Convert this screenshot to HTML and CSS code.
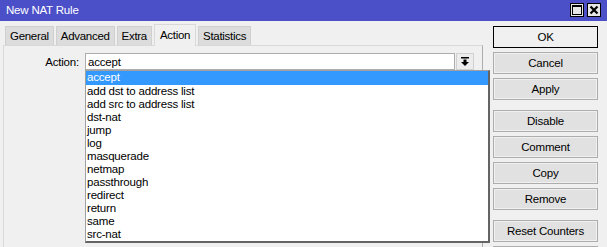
FILE: index.html
```html
<!DOCTYPE html>
<html lang="en">
<head>
  <meta charset="UTF-8">
  <title>New NAT Rule</title>
  <link rel="stylesheet" href="styles.css">
</head>
<body>
  <div class="window">
    <div class="titlebar">
      <span class="title">New NAT Rule</span>
      <div class="win-buttons">
        <span class="win-btn">
          <svg width="10" height="10" viewBox="0 0 10 10"><rect x="0.5" y="0.5" width="9" height="9" fill="none" stroke="#000"/><rect x="0" y="0" width="10" height="2" fill="#000"/></svg>
        </span>
        <span class="win-btn">
          <svg width="10" height="10" viewBox="0 0 10 10"><path d="M1.5 1.5 L8.5 8.5 M8.5 1.5 L1.5 8.5" stroke="#000" stroke-width="2.2"/></svg>
        </span>
      </div>
    </div>

    <div class="body">
      <div class="main">
        <!-- Tabs -->
        <div class="tabs">
          <div class="tab">General</div>
          <div class="tab">Advanced</div>
          <div class="tab">Extra</div>
          <div class="tab active">Action</div>
          <div class="tab">Statistics</div>
        </div>

        <div class="panel">
          <div class="row">
            <label class="label">Action:</label>
            <div class="combo">
              <div class="combo-field">accept</div>
              <div class="combo-btn">
                <svg width="10" height="10" viewBox="0 0 10 10"><rect x="1" y="0" width="8" height="1.5" fill="#000"/><path d="M3.5 2.5 H6.5 V5 H9 L5 9 L1 5 H3.5 Z" fill="#000"/></svg>
              </div>

              <ul class="dropdown">
                <li class="selected">accept</li>
                <li>add dst to address list</li>
                <li>add src to address list</li>
                <li>dst-nat</li>
                <li>jump</li>
                <li>log</li>
                <li>masquerade</li>
                <li>netmap</li>
                <li>passthrough</li>
                <li>redirect</li>
                <li>return</li>
                <li>same</li>
                <li>src-nat</li>
              </ul>
            </div>
          </div>
        </div>
      </div>

      <!-- Side buttons -->
      <div class="side">
        <button class="btn default">OK</button>
        <button class="btn">Cancel</button>
        <button class="btn">Apply</button>
        <button class="btn group">Disable</button>
        <button class="btn">Comment</button>
        <button class="btn">Copy</button>
        <button class="btn">Remove</button>
        <button class="btn group">Reset Counters</button>
        <button class="btn"></button>
      </div>
    </div>
  </div>
</body>
</html>
```

FILE: styles.css
```css
/* General */
body {
  margin: 0;
  padding: 0;
  font-family: 'Liberation Sans', Arial, sans-serif;
  font-size: 11px;
  letter-spacing: -0.2px;
  color: #000;
  background: #f0f0f0;
}

.window {
  width: 607px;
  height: 247px;
  overflow: hidden;
  background: #f0f0f0;
}

/* Title bar */
.titlebar {
  height: 21px;
  background: #4b4fc8;
  display: flex;
  align-items: center;
  justify-content: space-between;
  padding: 0 6px 0 6px;
  box-sizing: border-box;
}

.title {
  color: #fff;
  font-size: 11.5px;
  margin-top: -1px;
}

.win-buttons {
  display: flex;
  gap: 3px;
  margin-top: -1px;
}

.win-btn {
  width: 12px;
  height: 12px;
  background: #e6e6e6;
  border: 1px solid #000;
  display: flex;
  align-items: center;
  justify-content: center;
}

/* Layout */
.body {
  display: flex;
}

.main {
  width: 480px;
  margin-left: 3px;
}

/* Tabs */
.tabs {
  display: flex;
  gap: 2px;
  margin-top: 4px;
  margin-left: 2px;
  height: 20px;
  align-items: flex-end;
}

.tab {
  height: 19px;
  line-height: 19px;
  padding: 0 4px;
  background: #dcdcdc;
  border: 1px solid #d0d0d0;
  border-bottom: none;
  font-size: 11.5px;
  letter-spacing: -0.3px;
  box-sizing: border-box;
}

.tab.active {
  height: 22px;
  line-height: 20px;
  background: #f0f0f0;
  border-color: #d9d9d9;
  margin-bottom: -1px;
  position: relative;
  padding: 0 5px;
}

.panel {
  border-top: 1px solid #d9d9d9;
  border-left: 1px solid #d9d9d9;
  border-right: 1px solid #adadad;
  height: 220px;
  box-sizing: border-box;
}

.row {
  display: flex;
  align-items: flex-start;
  margin-top: 7px;
}

.label {
  width: 81px;
  text-align: right;
  padding-top: 3px;
  padding-right: 6px;
  box-sizing: border-box;
  font-size: 11.5px;
}

/* Combo box */
.combo {
  position: relative;
  display: flex;
  gap: 1px;
}

.combo-field {
  width: 370px;
  height: 17px;
  line-height: 16px;
  background: #fff;
  border: 1px solid #adadad;
  padding-left: 2px;
  box-sizing: border-box;
  font-size: 11.5px;
}

.combo-btn {
  width: 18px;
  height: 17px;
  background: #ececec;
  border: 1px solid #d0d0d0;
  box-sizing: border-box;
  display: flex;
  align-items: center;
  justify-content: center;
}

.dropdown {
  position: absolute;
  top: 17px;
  left: 0;
  width: 405px;
  margin: 0;
  padding: 0;
  list-style: none;
  background: #fff;
  border: 1px solid #a0a0a0;
  border-right: 2px solid #646464;
  border-bottom: 2px solid #646464;
  box-sizing: border-box;
  font-size: 11.5px;
}

.dropdown li {
  height: 13px;
  line-height: 13px;
  padding-left: 1px;
}

.dropdown li.selected {
  background: #3399ff;
  color: #fff;
  height: 14px;
}

/* Side buttons */
.side {
  display: flex;
  flex-direction: column;
  gap: 4px;
  margin-left: 10px;
  margin-top: 5px;
}

.btn {
  flex-shrink: 0;
  width: 105px;
  height: 22px;
  margin: 0;
  padding: 0;
  background: #e1e1e1;
  border: 1px solid #adadad;
  font-family: 'Liberation Sans', Arial, sans-serif;
  font-size: 11.5px;
  letter-spacing: -0.2px;
  color: #000;
  box-shadow: inset 0 0 0 1px #f0f0f0;
}

.btn.default {
  border: 1px solid #000;
  box-shadow: none;
  background: #f0f0f0;
}

.btn.group {
  margin-top: 6px;
}
```
